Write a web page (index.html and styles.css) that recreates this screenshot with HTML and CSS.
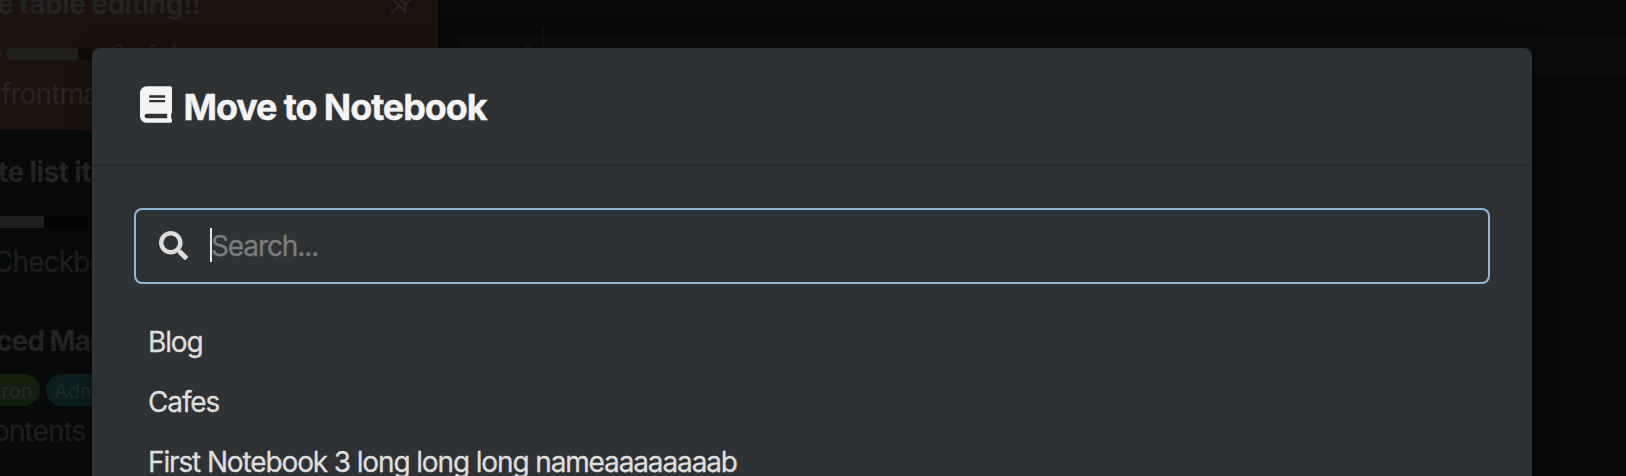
FILE: index.html
```html
<!DOCTYPE html>
<html lang="en">
<head>
<meta charset="utf-8">
<title>Move to Notebook</title>
<link rel="stylesheet" href="styles.css">
</head>
<body>
<div class="app">
  <div class="notes">
    <article class="note note--active">
      <svg class="pin" viewBox="0 0 32 32"><path d="M2 28L10 20M3 12L16 26V18L25 11H31M8 10L17 19"/></svg>
      <h2 class="note-title title-a">e table editing!!</h2>
      <div class="progress"><i class="dot"></i><div class="bar bar-a"><div class="fill" style="width:75%"></div></div><span class="count">3 of 4</span></div>
      <p class="snippet snippet-a">frontma</p>
    </article>
    <article class="note">
      <h2 class="note-title title-b">te list ite</h2>
      <div class="progress"><div class="bar bar-b"><div class="fill" style="width:50%"></div></div></div>
      <p class="snippet snippet-b">Checkbo</p>
    </article>
    <article class="note">
      <h2 class="note-title title-c">ced Mar</h2>
      <div class="tags"><span class="tag tag-green">tron</span><span class="tag tag-teal">Adm</span></div>
      <p class="snippet snippet-c">ontents l</p>
    </article>
    <article class="note"></article>
  </div>
  <main class="editor"><div class="ruler"><span class="line-no">1</span><i class="cursor-line"></i></div></main>
</div>
<section class="modal">
  <header class="modal-head">
    <svg class="book" viewBox="0 0 448 512"><path d="M448 360V24c0-13.300-10.700-24-24-24H96C43 0 0 43 0 96v320c0 53 43 96 96 96h328c13.300 0 24-10.700 24-24v-16c0-7.500-3.500-14.300-8.900-18.700-4.200-15.400-4.200-59.300 0-74.700 5.400-4.300 8.900-11.100 8.900-18.600zM128 134c0-3.300 2.700-6 6-6h212c3.300 0 6 2.700 6 6v20c0 3.300-2.700 6-6 6H134c-3.300 0-6-2.700-6-6v-20zm0 64c0-3.300 2.700-6 6-6h212c3.300 0 6 2.700 6 6v20c0 3.300-2.700 6-6 6H134c-3.300 0-6-2.700-6-6v-20zm253.400 250H96c-17.700 0-32-14.300-32-32 0-17.600 14.400-32 32-32h285.400c-1.900 17.100-1.900 46.900 0 64z"/></svg>
    <h1 class="modal-title">Move to Notebook</h1>
  </header>
  <div class="modal-body">
    <div class="search">
      <svg class="glass" viewBox="0 0 512 512"><path d="M505 442.700L405.300 343c-4.500-4.500-10.600-7-17-7H372c27.600-35.300 44-79.700 44-128C416 93.100 322.900 0 208 0S0 93.100 0 208s93.100 208 208 208c48.300 0 92.700-16.400 128-44v16.300c0 6.400 2.500 12.500 7 17l99.700 99.700c9.400 9.400 24.600 9.400 33.900 0l28.300-28.300c9.400-9.400 9.400-24.600.1-34zM208 336c-70.700 0-128-57.200-128-128 0-70.700 57.200-128 128-128 70.700 0 128 57.200 128 128 0 70.700-57.200 128-128 128z"/></svg>
      <i class="caret"></i><span class="placeholder">Search...</span>
    </div>
    <ul class="books">
      <li>Blog</li>
      <li>Cafes</li>
      <li class="long">First Notebook 3 long long long nameaaaaaaaab</li>
    </ul>
  </div>
</section>
</body>
</html>
```
FILE: styles.css
```css
* { box-sizing: border-box; }
html, body { margin: 0; height: 476px; overflow: hidden; }
body { position: relative; background: #070707; color: #dedede; font-family: Inter, "Liberation Sans", sans-serif; font-size: 28px; }
h1, h2, p, ul { margin: 0; padding: 0; }

.app { display: flex; height: 476px; overflow: hidden; color: #222323; }
.notes { width: 438px; margin-top: -38px; flex: none; }
.note { position: relative; height: 168.500px; padding-top: 24px; background: #080a0a; border-bottom: 2px solid #060707; white-space: nowrap; overflow: hidden; }
.note--active { height: 168px; background: #1c110c; border-color: #1c110c; }
.pin { position: absolute; left: 389px; top: 24px; width: 32px; height: 32px; fill: none; stroke: #292421; stroke-width: 2; }
.note-title { height: 36px; line-height: 36px; font-size: 28px; font-weight: 700; letter-spacing: -0.6px; }
.title-a { margin-left: -3px; letter-spacing: -0.500px; }
.title-b { margin-left: -2px; }
.title-c { margin-left: -4px; letter-spacing: -1px; }
.progress { display: flex; align-items: center; height: 12px; margin-top: 26px; }
.dot { width: 4px; height: 4px; margin: 0 6px 0 -2px; border-radius: 2px; background: #222; }
.bar { height: 12px; overflow: hidden; border-radius: 6px; background: #110a07; flex: none; }
.bar-a { width: 96px; margin-left: -2px; }
.bar-b { width: 88px; background: #030404; border-radius: 0 6px 6px 0; }
.fill { height: 12px; background: #1e1e1e; }
.bar-a .fill { background: #211f1c; }
.count { margin-left: 8px; font-size: 25px; }
.snippet { height: 36px; line-height: 36px; margin-top: 16px; letter-spacing: -0.9px; color: #1d1e1e; -webkit-text-stroke: 0.3px; }
.note--active .snippet { color: #282320; }
.snippet-a { margin-left: 1px; }
.snippet-b { margin-left: -7px; }
.snippet-c { margin-left: -7px; margin-top: 7px; }
.tags { display: flex; gap: 6px; margin-top: 15px; }
.tag { height: 32px; line-height: 30px; padding: 2px 8px; border-radius: 16px; font-size: 20px; }
.tag-green { width: 40px; padding-left: 0; text-indent: -5px; border-radius: 0 16px 16px 0; background: #10200d; color: #252b24; }
.tag-teal { background: #0a1d1f; color: #20292a; box-shadow: inset 0 0 0 1px #0b2224; }
.editor { flex: 1; padding: 36px 0 0 20px; }
.ruler { display: flex; height: 38px; background: #090b0c; }
.line-no { width: 84px; padding: 5px 10px 0 0; text-align: right; font: bold 24px Inter, sans-serif; color: #141617; }
.cursor-line { width: 2px; height: 46px; margin-top: -8px; background: #0d0f10; }

.modal { position: absolute; left: 92px; top: 48px; width: 1440px; height: 440px; border-radius: 8px; background: #2f3235; box-shadow: 0 0 24px rgba(0,0,0,.25); }
.modal-head { display: flex; align-items: flex-start; height: 118px; padding: 38px 47.500px 0; border-bottom: 2px solid #27292c; color: #f4f4f4; }
.book { width: 32px; height: 37px; fill: currentColor; flex: none; }
.modal-title { margin: -1px 0 0 12px; font-size: 36px; line-height: 44px; font-weight: 700; letter-spacing: -1.120px; white-space: nowrap; -webkit-text-stroke: 0.4px; }
.modal-body { padding: 42px 42px 0; }
.search { display: flex; align-items: center; height: 76px; padding-left: 23px; border: 2px solid #8fb6d9; border-radius: 8px; }
.glass { width: 29px; height: 29px; fill: #dcdcdc; margin-top: -2px; }
.caret { width: 2px; height: 34px; margin-left: 22px; margin-top: -2px; background: #e4e4e4; }
.placeholder { margin-left: -1px; color: #7b7c7d; letter-spacing: -1.100px; -webkit-text-stroke: 0.3px; }
.books { list-style: none; margin-top: 28px; padding-left: 14px; }
.books li { height: 60px; line-height: 61px; letter-spacing: -1.130px; white-space: nowrap; -webkit-text-stroke: 0.3px; }
```
